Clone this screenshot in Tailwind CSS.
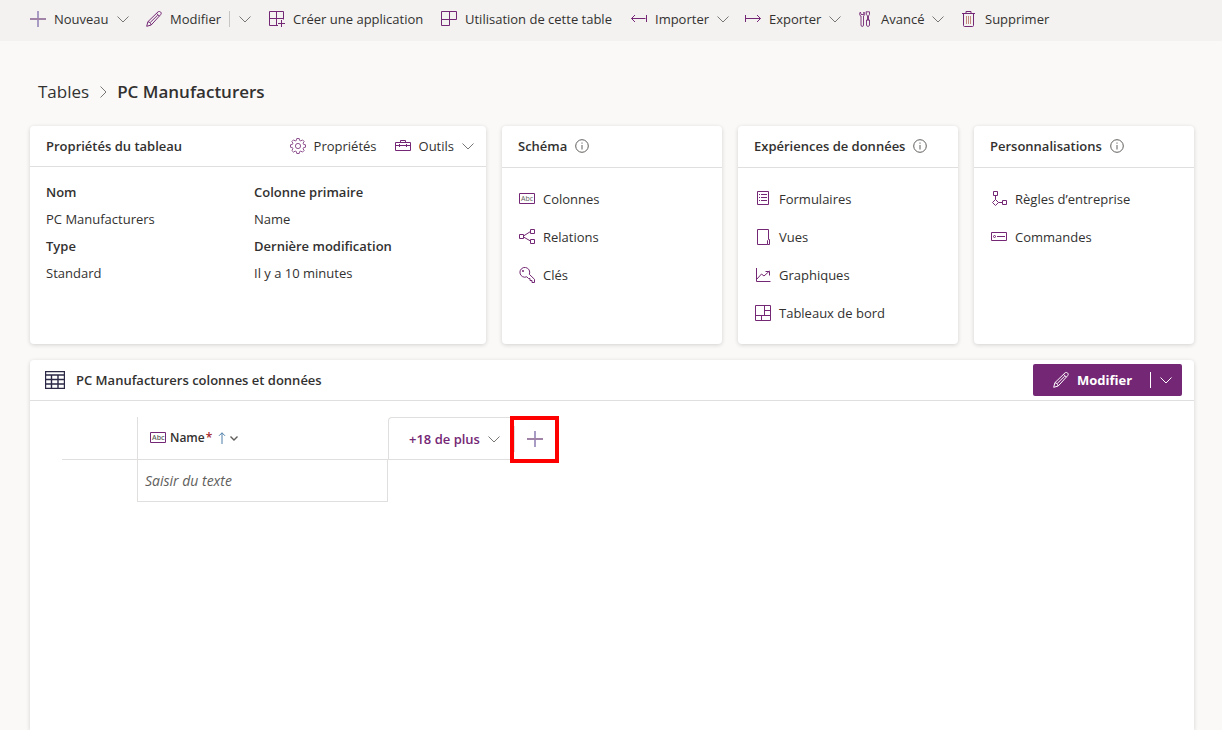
<!DOCTYPE html>
<html lang="fr">
<head>
    <meta charset="UTF-8">
    <meta name="viewport" content="width=device-width, initial-scale=1.0">
    <title>PC Manufacturers - Tables</title>
    <script src="https://cdn.jsdelivr.net/npm/@tailwindcss/browser@4"></script>
</head>
<body class="min-h-screen flex flex-col bg-[#faf9f8] font-['Open_Sans','Noto_Sans',sans-serif] text-[13px] leading-5 text-[#323130]">
    <!-- Shared icons -->
    <svg class="hidden">
        <symbol id="chevron" viewBox="0 0 12 12"><path d="M.5 3.5 6 9l5.5-5.5" fill="none" stroke="currentColor"/></symbol>
        <symbol id="pencil" viewBox="0 0 16 16"><path d="M.7 15.3l1.2-4.6L12 .9c.8-.7 1.9-.6 2.6.1s.8 1.800.1 2.600L5.200 14zM10.500 2.300l2.900 2.900M1.900 10.700c1.700.2 2.900 1.500 3.300 3.300M4.200 11.500l7.600-7.500" fill="none" stroke="currentColor"/></symbol>
        <symbol id="info" viewBox="0 0 14 14"><circle cx="7" cy="7" r="6.3" fill="none" stroke="#605e5c"/><path d="M7 6v4.500M7 3.500v1.200" stroke="#605e5c"/></symbol>
        <symbol id="abc" viewBox="0 0 16 16"><path d="M.5 2.500h15v10H.5z" fill="none" stroke="currentColor"/><text x="2" y="10" font-size="7" fill="#605e5c" font-family="Open Sans, sans-serif">Abc</text></symbol>
        <symbol id="plus" viewBox="0 0 16 16"><path d="M8 0v16" stroke="#a89cc4" stroke-width="2"/><path d="M0 8h16" stroke="#a283a8" stroke-width="2"/></symbol>
    </svg>

    <!-- Command bar -->
    <nav class="flex items-center h-[41px] pb-[3px] pl-[30px] bg-[#f3f2f1] whitespace-nowrap">
        <button class="flex items-center gap-2 w-[116px]">
            <svg class="size-4"><use href="#plus"/></svg>
            Nouveau
            <svg class="size-3 text-[#797775]"><use href="#chevron"/></svg>
        </button>
        <button class="flex items-center gap-2 w-[83px]">
            <svg class="size-4 text-[#742774]"><use href="#pencil"/></svg>
            Modifier
        </button>
        <button class="flex items-center w-10 h-4 pl-[9px] border-l border-[#c8c6c4]" aria-label="Plus d'options">
            <svg class="size-3 text-[#797775]"><use href="#chevron"/></svg>
        </button>
        <button class="flex items-center gap-2 w-[172px]">
            <svg class="size-4 text-[#742774]" viewBox="0 0 16 16"><path d="M9 14.500H.5V.5h14v8M.5 7.500h14M7.500.5v14M12.500 9v7M9 12.500h7" fill="none" stroke="currentColor"/></svg>
            Créer une application
        </button>
        <button class="flex items-center gap-2 w-[190px]">
            <svg class="size-4 text-[#742774]" viewBox="0 0 16 16"><path d="M.5.5h15v8H.5M.5.5v14h8V.5" fill="none" stroke="currentColor"/></svg>
            Utilisation de cette table
        </button>
        <button class="flex items-center gap-2 w-[114px]">
            <svg class="size-4 text-[#742774]" viewBox="0 0 16 16"><path d="M.5 7.500h14M4 4 .5 7.500 4 11M15.500 4v7" fill="none" stroke="currentColor"/></svg>
            Importer
            <svg class="size-3 text-[#797775]"><use href="#chevron"/></svg>
        </button>
        <button class="flex items-center gap-2 w-[112px]">
            <svg class="size-4 text-[#742774]" viewBox="0 0 16 16"><path d="M.5 4v7M1 7.500h14.500M12 4l3.500 3.500L12 11" fill="none" stroke="currentColor"/></svg>
            Exporter
            <svg class="size-3 text-[#797775]"><use href="#chevron"/></svg>
        </button>
        <button class="flex items-center gap-2 w-[104px]">
            <svg class="size-4 text-[#742774]" viewBox="0 0 16 16"><path d="M3.500 1C2.500 2 2.200 3 3 4.500l1 .5v9c0 2 2.500 2 2.500 0V5l1-1c.5-1 .3-2-.7-3v2.500H4zM9 .8h3.500v2.500L11.500 5v4h-1V5L9.500 3.300zM9.500 9h3v5.500c0 1-3 1-3 0z" fill="none" stroke="currentColor" stroke-width=".9"/></svg>
            Avancé
            <svg class="size-3 text-[#797775]"><use href="#chevron"/></svg>
        </button>
        <button class="flex items-center gap-2">
            <svg class="size-4 text-[#742774]" viewBox="0 0 16 16"><path d="M1 2.500h13M5 2.500v-2h5v2M2.500 2.500v12c0 .6.4 1 1 1h8c.6 0 1-.4 1-1v-12" fill="none" stroke="currentColor"/><path d="M5.500 5v8M7.500 5v8M9.500 5v8" stroke="#c48a80"/></svg>
            Supprimer
        </button>
    </nav>

    <main class="flex-1 flex flex-col pl-[30px] pr-7">
        <!-- Breadcrumb -->
        <div class="flex items-center gap-2 h-[85px] pt-4 pl-2 text-[17px] leading-6">
            <a href="#" class="text-[#323130]">Tables</a>
            <svg class="size-3 text-[#797775] -rotate-90"><use href="#chevron"/></svg>
            <h1 class="font-semibold">PC Manufacturers</h1>
        </div>

        <!-- Cards -->
        <div class="grid grid-cols-[1fr_220px_220px_220px] gap-4 whitespace-nowrap">
            <section class="h-[218px] bg-white rounded shadow-[0_1px_4px_rgba(0,0,0,0.16)]">
                <div class="flex items-center h-[41px] pl-4 pr-3 border-b border-[#e1dfdd]">
                    <h2 class="font-semibold mr-auto">Propriétés du tableau</h2>
                    <button class="flex items-center gap-2">
                        <svg class="size-4 text-[#742774]" viewBox="0 0 16 16"><path d="M6.800.5h2.400l.4 1.900 1.200.5 1.700-1 1.600 1.600-1 1.700.5 1.200 1.900.4v2.400l-1.900.4-.5 1.200 1 1.700-1.600 1.600-1.700-1-1.200.5-.4 1.900H6.800l-.4-1.900-1.200-.5-1.700 1-1.600-1.600 1-1.700-.5-1.200L.5 9.200V6.800l1.900-.4.5-1.200-1-1.700 1.600-1.600 1.700 1 1.200-.5z" fill="none" stroke="currentColor" stroke-width=".8"/><circle cx="8" cy="8" r="2.600" fill="none" stroke="currentColor" stroke-width=".8"/></svg>
                        Propriétés
                    </button>
                    <button class="flex items-center gap-2 ml-[18px]">
                        <svg class="size-4 text-[#742774]" viewBox="0 0 16 16"><path d="M.5 4.500h15v8H.5zM5.500 4.500v-2h5v2M.5 7.500h15M4.500 6v3M11.500 6v3" fill="none" stroke="currentColor"/></svg>
                        Outils
                        <svg class="size-3 text-[#797775]"><use href="#chevron"/></svg>
                    </button>
                </div>
                <div class="grid grid-cols-[208px_1fr] pl-4 pt-3 leading-[27px]">
                    <dl>
                        <dt class="font-semibold">Nom</dt>
                        <dd>PC Manufacturers</dd>
                        <dt class="font-semibold">Type</dt>
                        <dd>Standard</dd>
                    </dl>
                    <dl>
                        <dt class="font-semibold">Colonne primaire</dt>
                        <dd>Name</dd>
                        <dt class="font-semibold">Dernière modification</dt>
                        <dd>Il y a 10 minutes</dd>
                    </dl>
                </div>
            </section>

            <section class="bg-white rounded shadow-[0_1px_4px_rgba(0,0,0,0.16)]">
                <div class="flex items-center gap-2 h-[42px] px-4 pb-px border-b border-[#e1dfdd]">
                    <h2 class="font-semibold">Schéma</h2>
                    <svg class="size-[14px]"><use href="#info"/></svg>
                </div>
                <ul class="pl-[17px] pt-3">
                    <li><a href="#" class="flex items-center gap-2 h-[38px]">
                        <svg class="size-4 text-[#742774]"><use href="#abc"/></svg>
                        Colonnes
                    </a></li>
                    <li><a href="#" class="flex items-center gap-2 h-[38px]">
                        <svg class="size-4 text-[#742774]" viewBox="0 0 16 16"><path d="M.5 5.500h4v4h-4zM11.500.5h4v4h-4zM11.500 10.500h4v4h-4zM4.500 7l7-4.500M4.500 8l7 4" fill="none" stroke="currentColor"/></svg>
                        Relations
                    </a></li>
                    <li><a href="#" class="flex items-center gap-2 h-[38px]">
                        <svg class="size-4 text-[#742774]" viewBox="0 0 16 16"><path d="M10.300 7.300l5.200 5v3.200h-2.500v-2h-2v-2H9.500L7.800 9.800A4.900 4.900 0 1 1 10.300 7.300z" fill="none" stroke="currentColor"/><circle cx="4" cy="4" r="1" fill="currentColor"/></svg>
                        Clés
                    </a></li>
                </ul>
            </section>

            <section class="bg-white rounded shadow-[0_1px_4px_rgba(0,0,0,0.16)]">
                <div class="flex items-center gap-2 h-[42px] px-4 pb-px border-b border-[#e1dfdd]">
                    <h2 class="font-semibold">Expériences de données</h2>
                    <svg class="size-[14px]"><use href="#info"/></svg>
                </div>
                <ul class="pl-[17px] pt-3">
                    <li><a href="#" class="flex items-center gap-2 h-[38px]">
                        <svg class="size-4 text-[#742774]" viewBox="0 0 16 16"><path d="M2.500.5h11v13h-11zM6 3.500h6M6 6.500h6M6 9.500h6M4 3.500h1M4 6.500h1M4 9.500h1" fill="none" stroke="currentColor"/></svg>
                        Formulaires
                    </a></li>
                    <li><a href="#" class="flex items-center gap-2 h-[38px]">
                        <svg class="size-4 text-[#742774]" viewBox="0 0 16 16"><path d="M13.500 10V.5h-11v15h10M12.500 11.500v4h2v-5h-1z" fill="none" stroke="currentColor"/></svg>
                        Vues
                    </a></li>
                    <li><a href="#" class="flex items-center gap-2 h-[38px]">
                        <svg class="size-4 text-[#742774]" viewBox="0 0 16 16"><path d="M1.500 1v13.500H15.500M1.500 12.500l5-5.500 2.500 2 5.500-5M10.500 4.500h4v4" fill="none" stroke="currentColor"/></svg>
                        Graphiques
                    </a></li>
                    <li><a href="#" class="flex items-center gap-2 h-[38px]">
                        <svg class="size-4 text-[#742774]" viewBox="0 0 16 16"><path d="M.5.5h15v15H.5zM9.500.5v10M.5 10.500h15M9.500 5.500h6M6.500 10.500v5" fill="none" stroke="currentColor"/></svg>
                        Tableaux de bord
                    </a></li>
                </ul>
            </section>

            <section class="bg-white rounded shadow-[0_1px_4px_rgba(0,0,0,0.16)]">
                <div class="flex items-center gap-2 h-[42px] px-4 pb-px border-b border-[#e1dfdd]">
                    <h2 class="font-semibold">Personnalisations</h2>
                    <svg class="size-[14px]"><use href="#info"/></svg>
                </div>
                <ul class="pl-[17px] pt-3">
                    <li><a href="#" class="flex items-center gap-2 h-[38px]">
                        <svg class="size-4 text-[#742774]" viewBox="0 0 16 16"><path d="M2.500.5h4v4h-4zM4.500 4.500v4M4.500 8.500l3 3-3 3-3-3zM7.500 11.500h4M11.500 9.500h4v4h-4z" fill="none" stroke="currentColor"/></svg>
                        Règles d’entreprise
                    </a></li>
                    <li><a href="#" class="flex items-center gap-2 h-[38px]">
                        <svg class="size-4 text-[#742774]" viewBox="0 0 16 16"><path d="M.5 3.500h15v8H.5zM6 7.500h8" fill="none" stroke="currentColor"/><circle cx="3.500" cy="7.500" r="1" fill="none" stroke="currentColor"/></svg>
                        Commandes
                    </a></li>
                </ul>
            </section>
        </div>

        <!-- Columns and data -->
        <section class="flex-1 mt-4 bg-white rounded-t shadow-[0_1px_4px_rgba(0,0,0,0.16)]">
            <div class="flex items-center h-[41px] pl-[15px] pr-3 border-b border-[#e1dfdd]">
                <svg class="w-5 h-[18px]" viewBox="0 0 20 18"><path d="M.5.500h19v17H.5zM.5 4h19M.5 8.500h19M.5 13h19M6.500 4v14M13 4v14" fill="none" stroke="#2b2845" stroke-width="1.400"/></svg>
                <h2 class="ml-[11px] mr-auto font-semibold">PC Manufacturers colonnes et données</h2>
                <div class="flex items-center h-8 rounded-xs bg-[#742774] text-white">
                    <button class="flex items-center gap-2 w-[117px] pl-5 font-bold">
                        <svg class="size-4"><use href="#pencil"/></svg>
                        Modifier
                    </button>
                    <button class="flex items-center w-8 h-4 pl-[9px] border-l border-white" aria-label="Plus d'options">
                        <svg class="size-3"><use href="#chevron"/></svg>
                    </button>
                </div>
            </div>

            <table class="mt-4 ml-8 border-separate border-spacing-0 text-left">
                <thead>
                    <tr class="h-[43px]">
                        <td class="w-[75px] border-b border-[#e1dfdd]"></td>
                        <th class="w-[251px] pl-3 border-l border-b border-[#e1dfdd] text-[12px] font-semibold">
                            <div class="flex items-center gap-1">
                                <svg class="size-4 text-[#742774]"><use href="#abc"/></svg>
                                <span>Name <span class="-ml-[2px] text-[#a4262c]">*</span></span>
                                <svg class="ml-[2px] w-2 h-3" viewBox="0 0 8 12"><path d="M4 12V.8M1 3.800l3-3 3 3" fill="none" stroke="#4f7fa8"/></svg>
                                <svg class="size-2" viewBox="0 0 8 8"><path d="M.5 2.500 4 6l3.500-3.500" fill="none" stroke="#605e5c" stroke-width="1.400"/></svg>
                            </div>
                        </th>
                        <th class="w-[122px] p-0 border-t border-l border-b border-[#e1dfdd] rounded-tl">
                            <button class="flex items-center gap-2 pl-5 font-semibold text-[#742774] whitespace-nowrap">
                                +18 de plus
                                <svg class="size-3 text-[#797775]"><use href="#chevron"/></svg>
                            </button>
                        </th>
                        <th class="relative w-[49px] p-0">
                            <button class="flex items-center justify-center w-[41px] h-[26px] ml-1 border-l border-[#e1dfdd]" aria-label="Nouvelle colonne">
                                <svg class="size-4"><use href="#plus"/></svg>
                            </button>
                            <!-- Highlight around the add-column button -->
                            <div class="absolute -top-px left-0 w-[49px] h-[47px] border-4 border-[#ff0000] pointer-events-none"></div>
                        </th>
                    </tr>
                </thead>
                <tbody>
                    <tr class="h-[42px]">
                        <td></td>
                        <td class="p-0 border-x border-b border-[#e1dfdd]">
                            <input type="text" aria-label="Name" placeholder="Saisir du texte" class="w-full h-10 pl-[7px] text-[14px] italic placeholder:text-[#605e5c] outline-none">
                        </td>
                    </tr>
                </tbody>
            </table>
        </section>
    </main>
</body>
</html>
